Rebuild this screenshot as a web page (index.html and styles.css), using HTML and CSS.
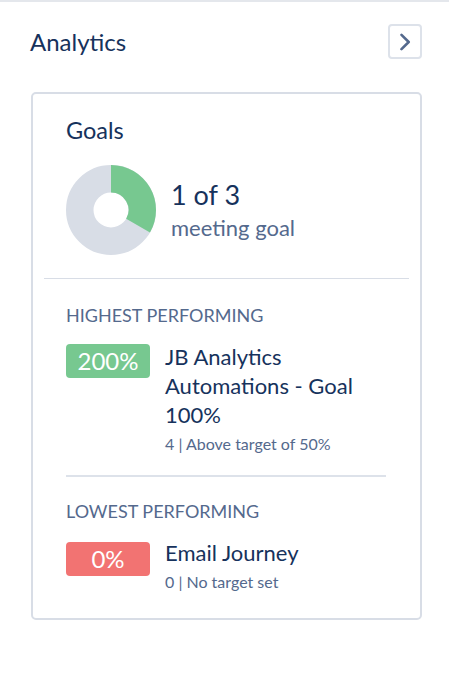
FILE: index.html
```html
<!DOCTYPE html>
<html>
<head>
<meta charset="utf-8">
<link rel="stylesheet" href="styles.css">
</head>
<body>
<div class="panel">
  <div class="header">
    <h1 class="title">Analytics</h1>
    <button class="nav-btn" aria-label="Next">
      <svg width="14" height="18" viewBox="0 0 14 18"><path d="M3.5 1.8 L10.7 9 L3.5 16.2" fill="none" stroke="#54698d" stroke-width="2.6" stroke-linecap="round" stroke-linejoin="round"/></svg>
    </button>
  </div>
  <div class="card">
    <div class="goals">
      <h2 class="goals-title">Goals</h2>
      <div class="summary">
        <svg class="donut" width="90" height="90" viewBox="0 0 90 90">
          <circle cx="45" cy="45" r="31.25" fill="none" stroke="#d8dde6" stroke-width="27.5"/>
          <path d="M45 0 A45 45 0 0 1 83.97 67.5 L60.16 53.75 A17.5 17.5 0 0 0 45 27.5 Z" fill="#77c890"/>
        </svg>
        <div class="summary-text">
          <div class="count">1 of 3</div>
          <div class="count-label">meeting goal</div>
        </div>
      </div>
    </div>
    <div class="divider-wide"></div>
    <div class="section section-high">
      <div class="section-label">HIGHEST PERFORMING</div>
      <div class="item">
        <span class="badge badge-good">200%</span>
        <div class="item-body">
          <div class="item-name">JB Analytics Automations - Goal 100%</div>
          <div class="item-meta">4 | Above target of 50%</div>
        </div>
      </div>
    </div>
    <div class="divider-inset"></div>
    <div class="section">
      <div class="section-label">LOWEST PERFORMING</div>
      <div class="item">
        <span class="badge badge-bad">0%</span>
        <div class="item-body">
          <div class="item-name">Email Journey</div>
          <div class="item-meta">0 | No target set</div>
        </div>
      </div>
    </div>
  </div>
</div>
</body>
</html>
```
FILE: styles.css
```css
* { box-sizing: border-box; }
html, body { margin: 0; padding: 0; background: #ffffff; }
body {
  font-family: Lato, "Open Sans", "Liberation Sans", sans-serif;
  color: #16325c;
  width: 449px;
  height: 687px;
  overflow: hidden;
}
.panel {
  border-top: 2px solid #e4e7ec;
  padding: 0 27px 0 31px;
}
.header {
  display: flex;
  justify-content: space-between;
  align-items: center;
  margin-top: 22px;
  height: 35px;
}
.title {
  margin: 0 0 0 -1px;
  font-size: 24px;
  font-weight: 400;
  line-height: 28px;
  color: #16325c;
}
.nav-btn {
  width: 34px;
  height: 35px;
  padding: 0;
  border: 2px solid #dde2ea;
  border-radius: 4px;
  background: #fff;
  display: flex;
  align-items: center;
  justify-content: center;
}
.card {
  margin-top: 33px;
  border: 2px solid #d8dde6;
  border-radius: 5px;
  padding: 0 11px 26px 11px;
}
.goals {
  padding: 22px 22px 0 22px;
}
.goals-title {
  margin: 0;
  font-size: 23.5px;
  font-weight: 400;
  line-height: 28px;
  color: #16325c;
}
.summary {
  display: flex;
  align-items: center;
  gap: 15px;
  margin-top: 21px;
  padding-bottom: 23px;
}
.donut { display: block; flex: none; }
.count {
  font-size: 27px;
  line-height: 32px;
  color: #16325c;
}
.count-label {
  font-size: 22px;
  line-height: 26px;
  margin-top: 4px;
  color: #54698d;
}
.divider-wide {
  height: 1px;
  background: #d8dde6;
}
.divider-inset {
  height: 2px;
  background: #dde2ea;
  margin: 21px 23px 0 22px;
}
.section {
  padding: 23px 22px 0 22px;
}
.section-high {
  padding-top: 25px;
}
.section-label {
  font-size: 18px;
  line-height: 22px;
  color: #54698d;
}
.item {
  display: flex;
  align-items: flex-start;
  gap: 15px;
  margin-top: 17px;
}
.section-high .item {
  margin-top: 16px;
}
.badge {
  flex: none;
  width: 84px;
  height: 34px;
  margin-top: 3px;
  border-radius: 4px;
  color: #ffffff;
  font-size: 24px;
  line-height: 34px;
  text-align: center;
}
.section-high .badge {
  margin-top: 2px;
}
.badge-good { background: #77c890; }
.badge-bad { background: #f27372; }
.item-name {
  font-size: 22px;
  line-height: 28.5px;
  color: #16325c;
}
.section-high .item-name {
  line-height: 29px;
}
.item-meta {
  font-size: 16px;
  line-height: 20px;
  margin-top: 4.5px;
  color: #54698d;
}
```
